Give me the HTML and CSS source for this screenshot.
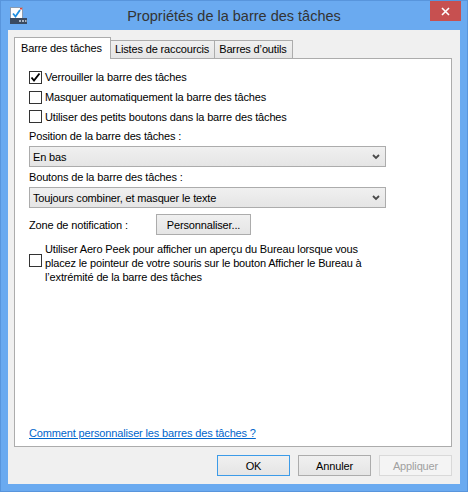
FILE: index.html
```html
<!DOCTYPE html>
<html lang="fr">
<head>
<meta charset="utf-8">
<title>Propriétés de la barre des tâches</title>
<link rel="stylesheet" href="styles.css">
</head>
<body>
<div class="window">
  <div class="titlebar">
    <div class="tb-left">
      <svg class="app-icon" width="18" height="18" viewBox="0 0 18 18">
        <rect x="0.5" y="0.5" width="12" height="12" fill="#fdfdfd" stroke="#8a9bb0"/>
        <rect x="10" y="1" width="2" height="1.5" fill="#e04040"/>
        <path d="M3 6.5 L5.5 9.5 L10 3" fill="none" stroke="#1e8ee0" stroke-width="1.8"/>
        <rect x="0" y="11" width="17" height="6" fill="#3a4a60"/>
        <rect x="9" y="13" width="2" height="2" fill="#a8b4c4"/>
        <rect x="12" y="13" width="2" height="2" fill="#a8b4c4"/>
        <rect x="15" y="13" width="1.5" height="2" fill="#a8b4c4"/>
      </svg>
    </div>
    <div class="title">Propriétés de la barre des tâches</div>
    <div class="tb-right">
      <div class="close">
        <svg width="9" height="9" viewBox="0 0 9 9"><path d="M1 1 L8 8 M8 1 L1 8" stroke="#fff" stroke-width="1.6"/></svg>
      </div>
    </div>
  </div>
  <div class="client">
    <div class="tabs">
      <div class="tab active">Barre des tâches</div>
      <div class="tab">Listes de raccourcis</div>
      <div class="tab">Barres d’outils</div>
    </div>
    <div class="panel">
      <div class="checks">
        <label class="check"><span class="box"><svg width="11" height="11" viewBox="0 0 11 11"><path d="M1.5 5.5 L4 8.5 L9.5 1.5" fill="none" stroke="#000" stroke-width="1.9"/></svg></span>Verrouiller la barre des tâches</label>
        <label class="check"><span class="box"></span>Masquer automatiquement la barre des tâches</label>
        <label class="check"><span class="box"></span>Utiliser des petits boutons dans la barre des tâches</label>
      </div>
      <div class="field-label first">Position de la barre des tâches :</div>
      <div class="select"><span>En bas</span><svg class="arrow" width="8" height="6" viewBox="0 0 8 6"><path d="M1 1 L4 4 L7 1" fill="none" stroke="#4a4a4a" stroke-width="1.8"/></svg></div>
      <div class="field-label">Boutons de la barre des tâches :</div>
      <div class="select"><span>Toujours combiner, et masquer le texte</span><svg class="arrow" width="8" height="6" viewBox="0 0 8 6"><path d="M1 1 L4 4 L7 1" fill="none" stroke="#4a4a4a" stroke-width="1.8"/></svg></div>
      <div class="notif">
        <span>Zone de notification :</span>
        <div class="btn notif-btn">Personnaliser...</div>
      </div>
      <label class="check peek"><span class="box"></span><span class="peek-text">Utiliser Aero Peek pour afficher un aperçu du Bureau lorsque vous<br>placez le pointeur de votre souris sur le bouton Afficher le Bureau à<br>l’extrémité de la barre des tâches</span></label>
      <div class="spacer"></div>
      <a class="link" href="#">Comment personnaliser les barres des tâches ?</a>
    </div>
    <div class="buttons">
      <div class="btn default">OK</div>
      <div class="btn">Annuler</div>
      <div class="btn disabled">Appliquer</div>
    </div>
  </div>
</div>
</body>
</html>
```

FILE: styles.css
```css
* { box-sizing: border-box; }
html, body { margin: 0; padding: 0; }
body {
  width: 468px;
  height: 492px;
  font-family: "Liberation Sans", Arial, sans-serif;
  font-size: 11px;
  letter-spacing: -0.15px;
  color: #000;
  overflow: hidden;
}
.window {
  width: 468px;
  height: 492px;
  background: #6aaaf0;
  border: 1px solid #5895dc;
  display: flex;
  flex-direction: column;
}
.titlebar {
  height: 29px;
  display: grid;
  grid-template-columns: 1fr auto 1fr;
  align-items: start;
}
.tb-left { padding: 6px 0 0 9px; }
.app-icon { display: block; }
.title {
  font-size: 14.5px;
  letter-spacing: 0;
  color: #333;
  padding-top: 7px;
  line-height: 16px;
}
.tb-right { display: flex; justify-content: flex-end; padding-right: 6px; }
.close {
  width: 31px;
  height: 20px;
  background: #c75050;
  display: flex;
  align-items: center;
  justify-content: center;
}
.client {
  flex: 1;
  margin: 0 7px 7px 7px;
  background: #f0f0f0;
  padding: 7px 8px 0 6px;
  display: flex;
  flex-direction: column;
}
.tabs {
  display: flex;
  align-items: flex-end;
  height: 21px;
  position: relative;
  z-index: 1;
}
.tab {
  height: 18px;
  padding: 0 5px 0 4px;
  border: 1px solid #acacac;
  border-bottom: none;
  background: linear-gradient(#f0f0f0, #e5e5e5);
  line-height: 17px;
  margin-left: -1px;
}
.tab.active {
  height: 22px;
  margin-left: 0;
  margin-bottom: -1px;
  background: #fff;
  padding: 0 7px 0 6px;
  line-height: 21px;
  width: 97px;
}
.panel {
  height: 389px;
  background: #fff;
  border: 1px solid #acacac;
  padding: 0 0 0 14px;
  display: flex;
  flex-direction: column;
}
.checks { padding-top: 8px; }
.check {
  display: flex;
  align-items: center;
  gap: 3px;
  height: 20px;
}
.check:nth-child(3) { height: 19px; }
.box {
  width: 13px;
  height: 13px;
  border: 1px solid #333;
  background: #fff;
  display: flex;
  align-items: center;
  justify-content: center;
  flex: none;
}
.field-label {
  height: 13px;
  line-height: 13px;
  margin-top: 4px;
}
.select {
  width: 357px;
  height: 21px;
  margin-top: 3px;
  border: 1px solid #acacac;
  background: linear-gradient(#f0f0f0, #e5e5e5);
  display: flex;
  align-items: center;
  justify-content: space-between;
  padding: 0 5px 0 3px;
}
.arrow { display: block; }
.notif {
  display: flex;
  align-items: center;
  height: 21px;
  margin-top: 6px;
}
.notif span { width: 127px; }
.btn {
  height: 21px;
  width: 73px;
  border: 1px solid #acacac;
  background: linear-gradient(#f0f0f0, #e5e5e5);
  display: flex;
  align-items: center;
  justify-content: center;
  color: #000;
}
.notif-btn { width: 95px; height: 21px; }
.peek {
  height: auto;
  margin-top: 7px;
  align-items: flex-start;
}
.peek .box { margin-top: 12px; }
.peek-text {
  line-height: 14px;
}
.spacer { flex: 1; }
.link {
  color: #0066cc;
  text-decoration: underline;
  line-height: 14px;
  margin-bottom: 6px;
  align-self: flex-start;
}
.buttons {
  display: flex;
  justify-content: flex-end;
  gap: 8px;
  padding-top: 8px;
}
.btn.default { border-color: #3c9be8; }
.btn.disabled {
  color: #a0a0a0;
  border-color: #d9d9d9;
  background: #f4f4f4;
}
```
